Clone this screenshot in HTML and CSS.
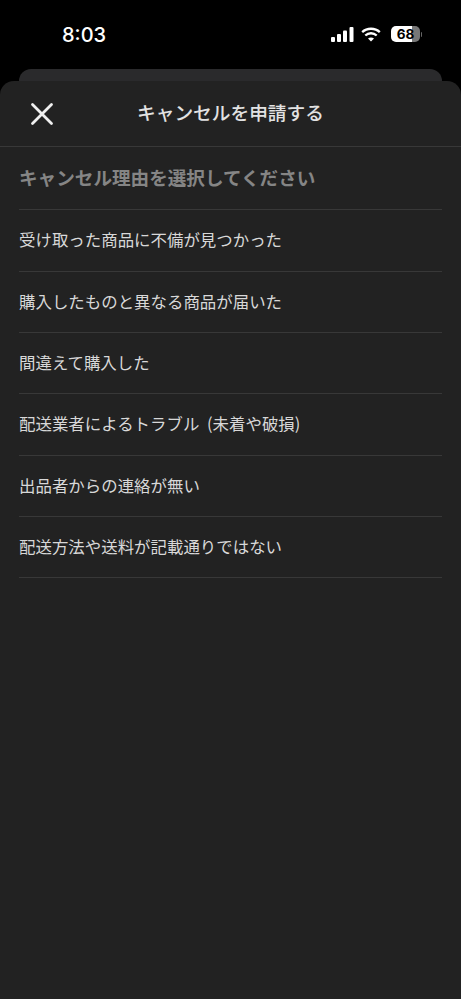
FILE: index.html
```html
<!DOCTYPE html>
<html lang="ja">
<head>
<meta charset="utf-8">
<title>キャンセルを申請する</title>
<link rel="stylesheet" href="styles.css">
</head>
<body>
<div class="status">
  <span class="time">8:03</span>
  <div class="indicators">
    <svg class="signal" width="23" height="15" viewBox="0 0 23 15"><rect x="0" y="10" width="4" height="5" rx="1"/><rect x="6" y="7" width="4" height="8" rx="1"/><rect x="12" y="3.500" width="4" height="11.500" rx="1"/><rect x="18.500" y="0" width="4" height="15" rx="1"/></svg>
    <svg class="wifi" width="20" height="15" viewBox="0 0 20 15" fill="none" stroke="#fff" stroke-width="2.300"><path d="M1.200 5.200C6 .6 14 .6 18.800 5.200"/><path d="M4.300 8.500C7.500 5.500 12.500 5.500 15.700 8.500"/><path d="M10 14.600L7 11.500C8.700 10.100 11.300 10.100 13 11.500Z" fill="#fff" stroke="none"/></svg>
    <div class="battery"><span class="level">68</span></div>
    <span class="nub"></span>
  </div>
</div>
<div class="stack">
  <div class="backcard"></div>
  <main class="sheet">
    <header class="bar">
      <svg class="close" width="24" height="24" viewBox="0 0 24 24" fill="none" stroke="#f0f0f0" stroke-width="2.800" stroke-linecap="round"><path d="M2.500 2.500L21.500 21.500M21.500 2.500L2.500 21.500"/></svg>
      <h1 class="title">キャンセルを申請する</h1>
    </header>
    <section class="content">
      <h2 class="heading">キャンセル理由を選択してください</h2>
      <ul class="reasons">
        <li>受け取った商品に不備が見つかった</li>
        <li>購入したものと異なる商品が届いた</li>
        <li>間違えて購入した</li>
        <li>配送業者によるトラブル <span class="note">(未着や破損)</span></li>
        <li>出品者からの連絡が無い</li>
        <li>配送方法や送料が記載通りではない</li>
      </ul>
    </section>
  </main>
</div>
</body>
</html>
```
FILE: styles.css
```css
* { box-sizing: border-box; }
html, body { margin: 0; padding: 0; height: 100%; }
body {
  width: 461px;
  height: 999px;
  overflow: hidden;
  background: #000;
  font-family: "Noto Sans CJK JP", "Liberation Sans", sans-serif;
  display: flex;
  flex-direction: column;
}
.status {
  height: 69px;
  flex: none;
  display: flex;
  justify-content: space-between;
  align-items: flex-start;
  padding: 21px 39px 0 62px;
}
.time {
  font-family: Inter, "Liberation Sans", sans-serif;
  font-size: 20px;
  font-weight: 500;
  line-height: 28px;
  color: #fff;
}
.indicators { display: flex; align-items: center; gap: 8px; height: 26px; }
.signal { fill: #fff; margin-right: -1px; }
.wifi { margin-right: 2px; }
.battery {
  width: 29px;
  height: 16px;
  border-radius: 5px;
  background: linear-gradient(to right, #fff 0, #fff 72%, #777 72%, #777 100%);
  display: flex;
  align-items: center;
  justify-content: center;
}
.level {
  font-family: Inter, "Liberation Sans", sans-serif;
  font-size: 13.500px;
  font-weight: 700;
  color: #000;
  line-height: 16px;
}
.nub {
  width: 1.500px;
  height: 5px;
  background: #666;
  margin-left: -7.500px;
  border-radius: 0 2px 2px 0;
}
.stack { flex: 1; display: flex; flex-direction: column; min-height: 0; }
.backcard {
  height: 24px;
  margin: 0 19px -12px;
  flex: none;
  background: #2a2a2c;
  border-radius: 12px 12px 0 0;
}
.sheet {
  flex: 1;
  position: relative;
  background: #222222;
  border-radius: 14px 14px 0 0;
}
.bar {
  height: 66px;
  border-bottom: 1px solid #383838;
  display: flex;
  align-items: center;
  justify-content: center;
  position: relative;
  padding-bottom: 3px;
}
.close { position: absolute; left: 30px; top: 21px; }
.title {
  margin: 0;
  font-size: 18.700px;
  font-weight: 500;
  line-height: 26px;
  color: #e2e2e2;
}
.content { padding: 0 19px; }
.heading {
  margin: 0;
  height: 63.300px;
  display: flex;
  align-items: center;
  font-size: 18.600px;
  font-weight: 700;
  color: #858585;
  border-bottom: 1px solid #383838;
  padding-bottom: 3px;
}
.reasons { list-style: none; margin: 0; padding: 0; }
.reasons li {
  height: 61.330px;
  display: flex;
  align-items: center;
  font-size: 16.450px;
  color: #d8d8d8;
  border-bottom: 1px solid #383838;
  padding-bottom: 2px;
  white-space: pre;
}
.note { margin-left: 4px; }
```
